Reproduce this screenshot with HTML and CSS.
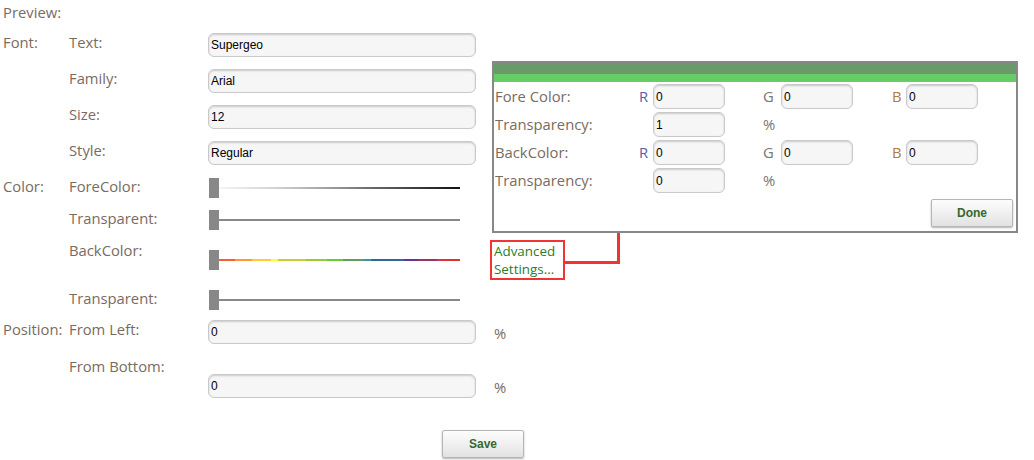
FILE: index.html
```html
<!DOCTYPE html>
<html lang="en">
<head>
    <meta charset="UTF-8">
    <title>Label Settings</title>
    <link rel="stylesheet" href="styles.css">
</head>
<body>
<div class="page">
    <div class="preview">Preview:</div>

    <div class="row">
        <span class="group">Font:</span>
        <span class="label">Text:</span>
        <input class="field" type="text" value="Supergeo">
    </div>
    <div class="row">
        <span class="group"></span>
        <span class="label">Family:</span>
        <input class="field" type="text" value="Arial">
    </div>
    <div class="row">
        <span class="group"></span>
        <span class="label">Size:</span>
        <input class="field" type="text" value="12">
    </div>
    <div class="row">
        <span class="group"></span>
        <span class="label">Style:</span>
        <input class="field" type="text" value="Regular">
    </div>

    <div class="row row-fore">
        <span class="group">Color:</span>
        <span class="label">ForeColor:</span>
        <div class="slider"><span class="thumb"></span><span class="track track-fore"></span></div>
    </div>
    <div class="row row-trans1">
        <span class="group"></span>
        <span class="label">Transparent:</span>
        <div class="slider"><span class="thumb"></span><span class="track"></span></div>
    </div>
    <div class="row row-back">
        <span class="group"></span>
        <span class="label">BackColor:</span>
        <div class="slider slider-low"><span class="thumb"></span><span class="track track-back"></span></div>
        <a class="advanced" href="#">Advanced<br>Settings...</a>
    </div>
    <div class="row row-trans2">
        <span class="group"></span>
        <span class="label">Transparent:</span>
        <div class="slider"><span class="thumb"></span><span class="track"></span></div>
    </div>

    <div class="row row-left">
        <span class="group">Position:</span>
        <span class="label">From Left:</span>
        <input class="field" type="text" value="0">
        <span class="unit">%</span>
    </div>
    <div class="row row-bottom">
        <span class="group"></span>
        <span class="label">From Bottom:</span>
        <input class="field field-low" type="text" value="0">
        <span class="unit unit-low">%</span>
    </div>

    <div class="actions">
        <button class="button">Save</button>
    </div>

    <span class="connector"></span>

    <div class="panel">
        <div class="panel-head"></div>
        <div class="panel-grid">
            <span class="plabel">Fore Color:</span>
            <span class="ch ch-r">R</span>
            <input class="small" type="text" value="0">
            <span></span>
            <span class="ch ch-g">G</span>
            <input class="small" type="text" value="0">
            <span></span>
            <span class="ch ch-b">B</span>
            <input class="small" type="text" value="0">

            <span class="plabel">Transparency:</span>
            <span></span>
            <input class="small" type="text" value="1">
            <span></span>
            <span class="ch ch-g">%</span>
            <span></span><span></span><span></span><span></span>

            <span class="plabel">BackColor:</span>
            <span class="ch ch-r">R</span>
            <input class="small" type="text" value="0">
            <span></span>
            <span class="ch ch-g">G</span>
            <input class="small" type="text" value="0">
            <span></span>
            <span class="ch ch-b">B</span>
            <input class="small" type="text" value="0">

            <span class="plabel">Transparency:</span>
            <span></span>
            <input class="small" type="text" value="0">
            <span></span>
            <span class="ch ch-g">%</span>
            <span></span><span></span><span></span><span></span>
        </div>
        <div class="panel-foot">
            <button class="button">Done</button>
        </div>
    </div>
</div>
</body>
</html>
```

FILE: styles.css
```css
body {
    margin: 0;
    padding: 0;
    background-color: #fff;
    font-family: "Open Sans", Arial, sans-serif;
    font-size: 14.8px;
    color: #7a6b5f;
}
.page {
    position: relative;
    width: 1034px;
    height: 460px;
    padding-left: 3px;
    box-sizing: border-box;
}
.preview {
    height: 33px;
    line-height: 24px;
}
.row {
    display: flex;
    align-items: flex-start;
    height: 36px;
    line-height: 18px;
}
.group {
    width: 66px;
    flex: none;
}
.label {
    width: 139px;
    flex: none;
}
.field {
    width: 268px;
    height: 24px;
    box-sizing: border-box;
    margin: 0;
    padding: 0 2px;
    border: 1px solid #c9c9c9;
    border-radius: 6px;
    background-color: #f6f6f6;
    box-shadow: inset 0 1px 2px rgba(0, 0, 0, 0.18);
    font-family: "Liberation Sans", Arial, sans-serif;
    font-size: 12px;
    color: #000;
}
.field-low {
    margin-top: 17px;
}
.unit {
    margin-left: 18px;
    padding-top: 4px;
}
.unit-low {
    padding-top: 21px;
}

.row-fore { height: 32px; }
.row-trans1 { height: 32px; }
.row-back { height: 48px; }
.row-trans2 { height: 31px; }
.row-left { height: 37px; }
.row-bottom { height: 41px; }

.slider {
    display: flex;
    align-items: center;
    width: 251px;
    height: 20px;
    margin: 1px 0 0 1px;
}
.slider-low {
    margin-top: 9px;
}
.thumb {
    width: 10px;
    height: 20px;
    background-color: #888;
    flex: none;
}
.track {
    flex: 1;
    height: 2px;
    background-color: #888;
}
.track-fore {
    background: linear-gradient(to right, #f4f4f4, #d0d0d0 25%, #a0a0a0 45%, #666 65%, #111);
}
.track-back {
    background: linear-gradient(to right,
        #ff5a36 0, #ff5a36 16px, #ff9933 16px, #ff9933 33px,
        #ffcc33 33px, #ffcc33 52px, #ffff33 52px, #ffff33 59px,
        #cccc33 59px, #cccc33 87px, #99cc33 87px, #99cc33 108px,
        #66cc33 108px, #66cc33 124px, #669966 124px, #669966 145px,
        #339999 145px, #339999 152px, #336699 152px, #336699 185px,
        #663399 185px, #663399 199px, #993366 199px, #993366 218px,
        #cc3366 218px, #cc3366 223px, #dd3333 223px, #dd3333 241px);
}

.advanced {
    display: block;
    flex: none;
    margin: -1px 0 0 30px;
    padding: 0 2px;
    border: 2px solid #f03333;
    color: #2a7d2a;
    text-decoration: none;
    font-size: 13.4px;
    line-height: 18px;
    height: 36px;
    width: 67px;
    white-space: nowrap;
}
.connector {
    position: absolute;
    left: 565px;
    top: 233px;
    width: 55px;
    height: 31px;
    box-sizing: border-box;
    border-right: 3px solid #f03333;
    border-bottom: 3px solid #f03333;
}

.actions {
    padding: 32px 0 0 439px;
}
.button {
    width: 82px;
    height: 28px;
    border: 1px solid #b5b5b5;
    border-radius: 2px;
    background: linear-gradient(#fdfdfd, #f0f0f0 50%, #e2e2e2);
    box-shadow: 0 1px 2px rgba(0, 0, 0, 0.3);
    font-family: "Liberation Sans", Arial, sans-serif;
    font-size: 12px;
    font-weight: bold;
    color: #36682f;
    cursor: pointer;
}

.panel {
    position: absolute;
    left: 492px;
    top: 61px;
    width: 526px;
    height: 172px;
    box-sizing: border-box;
    border: 2px solid #888;
    background-color: #fff;
}
.panel-head {
    height: 11px;
    background-color: #6a9a6a;
    border-bottom: 8px solid #66cc66;
}
.panel-grid {
    display: grid;
    grid-template-columns: 144px 14px 72px 38px 18px 72px 39px 14px 72px;
    grid-auto-rows: 28px;
    align-items: start;
    padding: 2px 0 0 1px;
    line-height: 25px;
}
.ch {
    line-height: 25px;
}
.ch-r { color: #5b5ea6; }
.ch-g { color: #777; }
.ch-b { color: #b07a3a; }
.small {
    width: 72px;
    height: 25px;
    box-sizing: border-box;
    margin: 0;
    padding: 0 2px;
    border: 1px solid #c9c9c9;
    border-radius: 6px;
    background-color: #f6f6f6;
    box-shadow: inset 0 1px 2px rgba(0, 0, 0, 0.18);
    font-family: "Liberation Sans", Arial, sans-serif;
    font-size: 12px;
    color: #000;
}
.panel-foot {
    display: flex;
    justify-content: flex-end;
    padding: 3px 3px 0 0;
}
```
